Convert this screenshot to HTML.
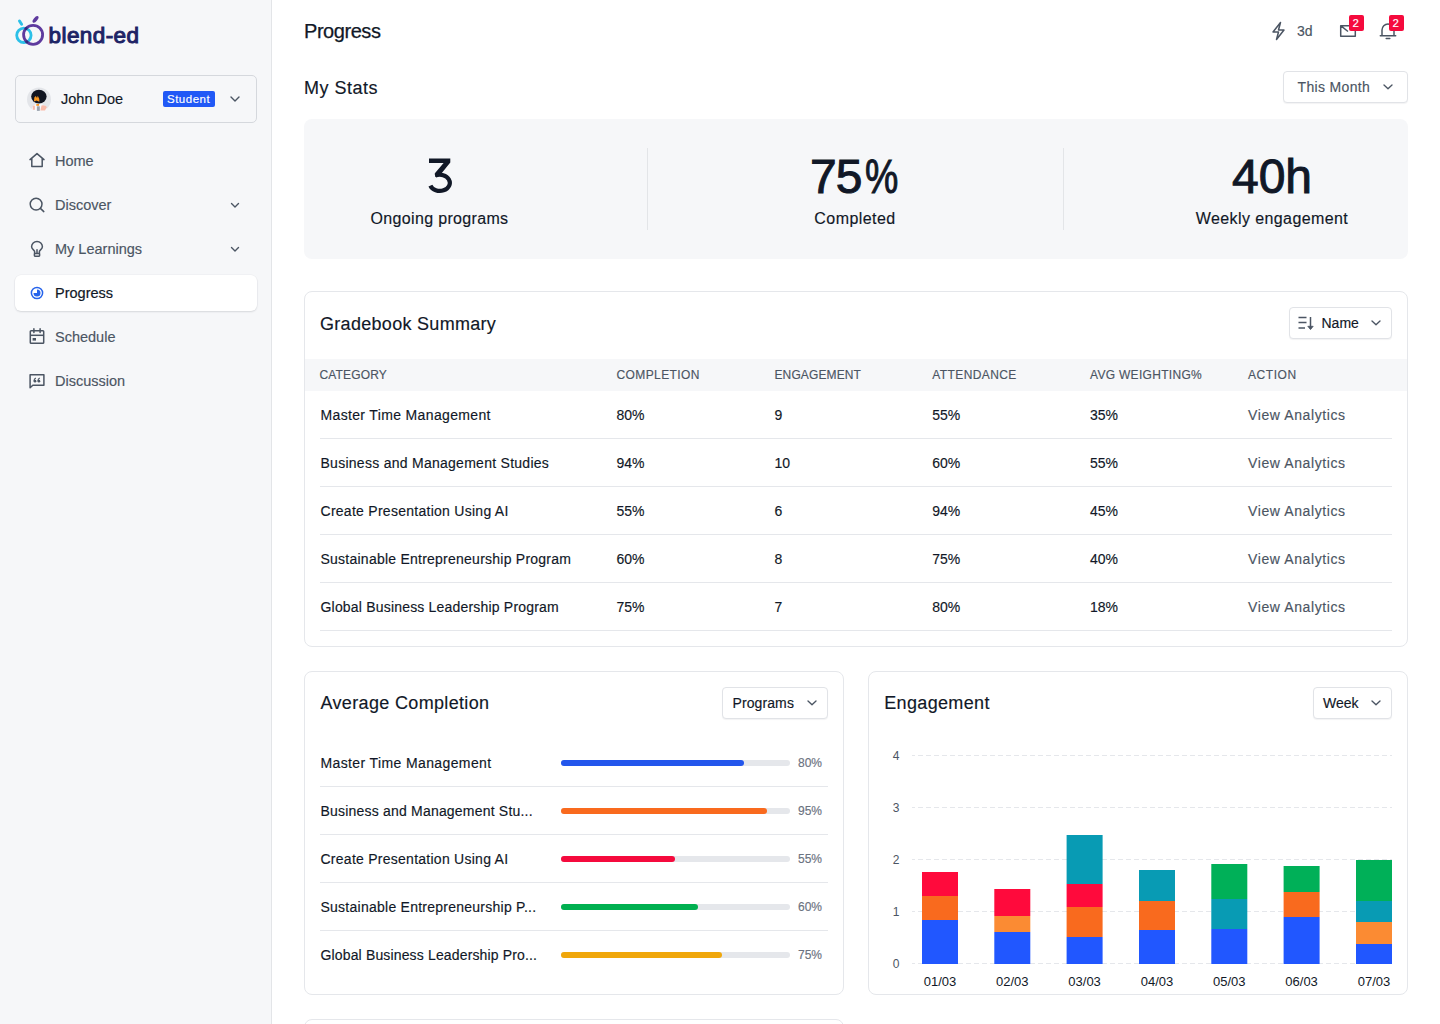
<!DOCTYPE html>
<html><head><meta charset="utf-8">
<style>
*{box-sizing:border-box;margin:0;padding:0}
html,body{width:1440px;height:1024px;overflow:hidden;background:#fff}
body{font-family:"Liberation Sans",sans-serif;color:#111827;position:relative;-webkit-text-stroke:0.15px currentColor}
.abs{position:absolute}
.t{position:absolute;white-space:nowrap;line-height:1}
#side{position:absolute;left:0;top:0;width:272px;height:1024px;background:#F6F7F9;border-right:1px solid #E3E5E8}
.card{position:absolute;border:1px solid #E5E7EB;border-radius:8px;background:#fff}
.dd{position:absolute;border:1px solid #E1E3E7;border-radius:4px;background:#fff;box-shadow:0 1px 1px rgba(16,24,40,0.05)}
.nav{position:absolute;left:15px;width:242px;height:36px}
.nav .t{left:40px;top:11px;font-size:14.5px;color:#4B5563}
.ic{position:absolute}
.th{position:absolute;top:369px;font-size:12px;letter-spacing:0.75px;color:#4B5563;line-height:1;white-space:nowrap}
.td{position:absolute;font-size:14px;letter-spacing:0.35px;color:#111827;line-height:1;white-space:nowrap}
.va{color:#4B5563}
.hr{position:absolute;height:1px;background:#E5E7EB}
</style></head>
<body>
<div id="side">
  <!-- logo -->
  <svg class="abs" style="left:0;top:0" width="150" height="60" viewBox="0 0 150 60">
    <circle cx="23.9" cy="35.3" r="7.2" fill="none" stroke="#2BC0E8" stroke-width="2.8"/>
    <circle cx="33.1" cy="34.8" r="9.5" fill="none" stroke="#5E3A9E" stroke-width="2.8"/>
    <circle cx="26.1" cy="28.5" r="1.5" fill="#2B2C7C"/><circle cx="26.8" cy="41.8" r="1.5" fill="#2B2C7C"/>
    <path d="M19.5 21 L21.6 24.2" stroke="#2BC0E8" stroke-width="3" stroke-linecap="round"/>
    <ellipse cx="35.5" cy="19.3" rx="1.9" ry="4" transform="rotate(40 35.4 19.4)" fill="#5E3A9E"/>
    <text x="48.6" y="42.6" font-family="Liberation Sans" font-size="22.5" fill="#1E2466" stroke="#1E2466" stroke-width="1" letter-spacing="0.4">blend-ed</text>
  </svg>
  <!-- user card -->
  <div class="abs" style="left:15px;top:75px;width:242px;height:48px;border:1px solid #D5D8DD;border-radius:5px"></div>
  <svg class="abs" style="left:27px;top:87px" width="24" height="25" viewBox="0 0 24 25">
    <circle cx="12" cy="12.4" r="12" fill="#E3E5E9"/>
    <path d="M4.5 22.5 Q6 17 12 16.5 Q18 17 20 22.5 Q16.5 25 12 25 Q7.5 25 4.5 22.5 Z" fill="#F8F9FB"/>
    <ellipse cx="11.9" cy="9.6" rx="7.7" ry="6.9" fill="#111521"/>
    <path d="M7 14.5 L7.3 10.5 L8.8 9 L10 11 L10.8 8.7 L12.3 12 L12.4 14.8 L9.5 13.5 Z" fill="#F7941E"/>
    <rect x="9.3" y="17" width="2.8" height="1.8" fill="#F7941E"/>
    <rect x="9.9" y="19.3" width="2.9" height="4.6" fill="#9CA3AF"/>
    <rect x="5.8" y="18.7" width="2.1" height="4.1" fill="#F9BBAA"/>
    <path d="M13.4 23.4 L14.5 18.5 Q18 17.5 19.9 20 L18 23.4 Z" fill="#F9BBAA"/>
  </svg>
  <div class="t" style="left:61px;top:92px;font-size:14.5px;color:#111827">John Doe</div>
  <div class="abs" style="left:163px;top:91px;width:52px;height:16px;background:#2159F6;border-radius:2px"></div>
  <div class="t" style="left:167px;top:94px;font-size:11.5px;color:#fff;letter-spacing:0.5px">Student</div>
  <svg class="abs" style="left:229px;top:93px" width="12" height="12" viewBox="0 0 12 12"><path d="M2 4 L6 8 L10 4" fill="none" stroke="#4B5563" stroke-width="1.4" stroke-linecap="round" stroke-linejoin="round"/></svg>

  <!-- nav -->

  <div class="nav" style="top:143px">
    <div class="t">Home</div>
  </div>
  <div class="nav" style="top:187px">
    <div class="t">Discover</div>
    <svg class="ic" style="left:214px;top:12px" width="12" height="12" viewBox="0 0 12 12"><path d="M2.5 4.5 L6 8 L9.5 4.5" fill="none" stroke="#4B5563" stroke-width="1.4" stroke-linecap="round" stroke-linejoin="round"/></svg>
  </div>
  <div class="nav" style="top:231px">
    <div class="t">My Learnings</div>
    <svg class="ic" style="left:214px;top:12px" width="12" height="12" viewBox="0 0 12 12"><path d="M2.5 4.5 L6 8 L9.5 4.5" fill="none" stroke="#4B5563" stroke-width="1.4" stroke-linecap="round" stroke-linejoin="round"/></svg>
  </div>
  <div class="nav" style="top:275px;background:#fff;border-radius:6px;box-shadow:0 1px 2px rgba(16,24,40,0.12),0 0 0 0.5px rgba(16,24,40,0.04)">
    <div class="t" style="color:#111827;-webkit-text-stroke:0.2px #111827">Progress</div>
  </div>
  <div class="nav" style="top:319px">
    <div class="t">Schedule</div>
  </div>
  <div class="nav" style="top:363px">
    <div class="t">Discussion</div>
  </div>

  <svg class="abs" style="left:24px;top:146px" width="26" height="250" viewBox="24 146 26 250">
    <g fill="none" stroke="#4B5563" stroke-width="1.5" stroke-linejoin="round" stroke-linecap="round">
      <path d="M30 159.6 L37 153.6 L44 159.6 M31.8 158.2 V166.6 H42.2 V158.2"/>
      <circle cx="36.1" cy="204.1" r="5.9"/><path d="M40.4 208.4 L43.8 211.6"/>
      <path d="M34.6 253.2 V251.5 C34.6 250.2 31.6 249.2 31.6 246.8 A5.4 5.4 0 0 1 42.4 246.8 C42.4 249.2 39.4 250.2 39.4 251.5 V253.2"/>
      <path d="M37 249.8 V253"/>
      <rect x="34.4" y="253.4" width="5.2" height="2.8" rx="0.6"/>
    </g>
    <g fill="none" stroke="#4B5563" stroke-width="1.5">
      <rect x="30.3" y="330.7" width="13.4" height="12.5" rx="0.8"/>
      <path d="M30.3 335.3 H43.7"/>
      <path d="M33.9 328.8 V332.6 M40.1 328.8 V332.6" stroke-linecap="round"/>
      <path d="M30.1 385.2 V374.8 H43.9 V385.2 H32.8 L30.1 387.8 Z" stroke-linejoin="round"/>
    </g>
    <rect x="32.6" y="338" width="3.4" height="2.6" fill="#4B5563"/>
    <g fill="#4B5563"><circle cx="35" cy="381.2" r="1.35"/><circle cx="38.9" cy="381.2" r="1.35"/></g><path d="M34 381 Q34 378.6 35.9 377.9 M37.9 381 Q37.9 378.6 39.8 377.9" fill="none" stroke="#4B5563" stroke-width="1.1"/>
    <circle cx="37" cy="293" r="5.6" fill="none" stroke="#2563EB" stroke-width="1.5"/>
    <path d="M37 289.5 A3.5 3.5 0 1 1 33.5 293 L37 293 Z" fill="#2563EB"/>
  </svg>
</div>

<!-- MAIN -->
<div class="t" style="left:304px;top:20.6px;font-size:20px;letter-spacing:-0.45px;-webkit-text-stroke:0.25px #111827;color:#111827">Progress</div>

<!-- top right -->
<svg class="abs" style="left:1270px;top:21px" width="17" height="20" viewBox="0 0 17 20"><path d="M10.5 1.5 L3 11 H8.5 L6.5 18.5 L14 9 H8.5 Z" fill="none" stroke="#4B5563" stroke-width="1.5" stroke-linejoin="round"/></svg>
<div class="t" style="left:1297px;top:23.6px;font-size:14px;color:#4B5563">3d</div>
<svg class="abs" style="left:1339px;top:24px" width="18" height="14" viewBox="0 0 18 14"><path d="M1.7 1.7 H16.3 V12.3 H1.7 Z M1.7 1.7 L9 7.5" fill="none" stroke="#4B5563" stroke-width="1.5" stroke-linejoin="round"/></svg>
<div class="abs" style="left:1349px;top:15px;width:15px;height:16px;background:#F50A3D;border-radius:2px"></div>
<div class="t" style="left:1352.5px;top:17.5px;font-size:11.5px;color:#fff">2</div>
<svg class="abs" style="left:1379px;top:20px" width="18" height="21" viewBox="0 0 18 21"><path d="M3 15.5 V10 A6 6 0 0 1 15 10 V15.5 M1.3 15.8 H16.7 M7.2 18.6 H10.8" fill="none" stroke="#4B5563" stroke-width="1.5" stroke-linecap="round"/></svg>
<div class="abs" style="left:1389px;top:15px;width:15px;height:16px;background:#F50A3D;border-radius:2px"></div>
<div class="t" style="left:1392.5px;top:17.5px;font-size:11.5px;color:#fff">2</div>

<div class="t" style="left:304px;top:79.2px;font-size:18px;letter-spacing:0.5px;color:#111827">My Stats</div>
<div class="dd" style="left:1283px;top:71px;width:125px;height:32px"></div>
<div class="t" style="left:1297.5px;top:80.2px;font-size:14px;letter-spacing:0.35px;color:#4B5563">This Month</div>
<svg class="abs" style="left:1382px;top:81px" width="12" height="12" viewBox="0 0 12 12"><path d="M2 4 L6 7.8 L10 4" fill="none" stroke="#4B5563" stroke-width="1.35" stroke-linecap="round" stroke-linejoin="round"/></svg>

<!-- stats -->
<div class="abs" style="left:304px;top:119px;width:1104px;height:140px;background:#F6F7F9;border-radius:8px"></div>
<div class="abs" style="left:647px;top:148px;width:1px;height:82px;background:#E3E5E8"></div>
<div class="abs" style="left:1063px;top:148px;width:1px;height:82px;background:#E3E5E8"></div>
<svg class="abs" style="left:420px;top:150px" width="40" height="50" viewBox="420 150 40 50"><path d="M429 158.5 H450.3 V162.6 L441.6 173.2 L435.1 177 V173 L443.6 162.9 H429 Z" fill="#111827"/><path d="M435.3 175.6 A10 8.1 0 1 1 430.4 185.6" fill="none" stroke="#111827" stroke-width="4.2"/></svg>
<div class="t" style="left:810px;top:152.7px;font-size:48px;-webkit-text-stroke:1px #111827;letter-spacing:-1px;color:#111827">75</div><div class="t" style="left:864.5px;top:152.7px;font-size:48px;-webkit-text-stroke:1px #111827;color:#111827;transform:scaleX(0.78);transform-origin:0 0">%</div>
<div class="t" style="left:1172px;width:200px;text-align:center;top:152.7px;font-size:48px;-webkit-text-stroke:1px #111827;color:#111827">40h</div>
<div class="t" style="left:339.5px;width:200px;text-align:center;top:210.5px;font-size:16px;letter-spacing:0.33px;color:#111827">Ongoing programs</div>
<div class="t" style="left:755px;width:200px;text-align:center;top:210.5px;font-size:16px;letter-spacing:0.45px;color:#111827">Completed</div>
<div class="t" style="left:1172px;width:200px;text-align:center;top:210.5px;font-size:16px;letter-spacing:0.4px;color:#111827">Weekly engagement</div>

<!-- gradebook -->
<div class="card" style="left:304px;top:291px;width:1104px;height:356px"></div>
<div class="t" style="left:320px;top:314.5px;font-size:18px;letter-spacing:0.3px">Gradebook Summary</div>
<div class="dd" style="left:1289px;top:307px;width:103px;height:32px"></div>
<div class="abs" style="left:305px;top:359px;width:1102px;height:32px;background:#F6F7F9"></div>
<svg class="abs" style="left:1297px;top:316px" width="18" height="15" viewBox="0 0 18 15"><path d="M1.5 1.5 H9.5 M1.5 6.5 H9.5 M1.5 12 H8" stroke="#4B5563" stroke-width="1.5"/><path d="M13.5 1 V12.5" stroke="#4B5563" stroke-width="1.5"/><path d="M10.8 10.3 L13.5 13.6 L16.2 10.3 Z" fill="#4B5563" stroke="#4B5563" stroke-width="0.8" stroke-linejoin="round"/></svg>
<div class="t" style="left:1321.5px;top:316.2px;font-size:14px;color:#111827">Name</div>
<svg class="abs" style="left:1370px;top:317px" width="12" height="12" viewBox="0 0 12 12"><path d="M2 4 L6 7.8 L10 4" fill="none" stroke="#4B5563" stroke-width="1.35" stroke-linecap="round" stroke-linejoin="round"/></svg>
<div class="th" style="left:319.5px;letter-spacing:0.15px">CATEGORY</div>
<div class="th" style="left:616.5px;letter-spacing:0.4px">COMPLETION</div>
<div class="th" style="left:774.5px;letter-spacing:0.12px">ENGAGEMENT</div>
<div class="th" style="left:932.3px;letter-spacing:0.4px">ATTENDANCE</div>
<div class="th" style="left:1090px;letter-spacing:0.3px">AVG WEIGHTING%</div>
<div class="th" style="left:1248px;letter-spacing:0.55px">ACTION</div>
<div class="td" style="left:320.5px;top:408.15px">Master Time Management</div>
<div class="td" style="left:616.5px;top:408.15px;letter-spacing:0">80%</div>
<div class="td" style="left:774.5px;top:408.15px;letter-spacing:0">9</div>
<div class="td" style="left:932.3px;top:408.15px;letter-spacing:0">55%</div>
<div class="td" style="left:1090px;top:408.15px;letter-spacing:0">35%</div>
<div class="td va" style="left:1248px;top:408.15px;letter-spacing:0.6px">View Analytics</div>
<div class="hr" style="left:320px;top:438px;width:1072px"></div>
<div class="td" style="left:320.5px;top:456.15px;letter-spacing:0.27px">Business and Management Studies</div>
<div class="td" style="left:616.5px;top:456.15px;letter-spacing:0">94%</div>
<div class="td" style="left:774.5px;top:456.15px;letter-spacing:0">10</div>
<div class="td" style="left:932.3px;top:456.15px;letter-spacing:0">60%</div>
<div class="td" style="left:1090px;top:456.15px;letter-spacing:0">55%</div>
<div class="td va" style="left:1248px;top:456.15px;letter-spacing:0.6px">View Analytics</div>
<div class="hr" style="left:320px;top:486px;width:1072px"></div>
<div class="td" style="left:320.5px;top:504.15px;letter-spacing:0.27px">Create Presentation Using AI</div>
<div class="td" style="left:616.5px;top:504.15px;letter-spacing:0">55%</div>
<div class="td" style="left:774.5px;top:504.15px;letter-spacing:0">6</div>
<div class="td" style="left:932.3px;top:504.15px;letter-spacing:0">94%</div>
<div class="td" style="left:1090px;top:504.15px;letter-spacing:0">45%</div>
<div class="td va" style="left:1248px;top:504.15px;letter-spacing:0.6px">View Analytics</div>
<div class="hr" style="left:320px;top:534px;width:1072px"></div>
<div class="td" style="left:320.5px;top:552.15px;letter-spacing:0.24px">Sustainable Entrepreneurship Program</div>
<div class="td" style="left:616.5px;top:552.15px;letter-spacing:0">60%</div>
<div class="td" style="left:774.5px;top:552.15px;letter-spacing:0">8</div>
<div class="td" style="left:932.3px;top:552.15px;letter-spacing:0">75%</div>
<div class="td" style="left:1090px;top:552.15px;letter-spacing:0">40%</div>
<div class="td va" style="left:1248px;top:552.15px;letter-spacing:0.6px">View Analytics</div>
<div class="hr" style="left:320px;top:582px;width:1072px"></div>
<div class="td" style="left:320.5px;top:600.15px;letter-spacing:0.19px">Global Business Leadership Program</div>
<div class="td" style="left:616.5px;top:600.15px;letter-spacing:0">75%</div>
<div class="td" style="left:774.5px;top:600.15px;letter-spacing:0">7</div>
<div class="td" style="left:932.3px;top:600.15px;letter-spacing:0">80%</div>
<div class="td" style="left:1090px;top:600.15px;letter-spacing:0">18%</div>
<div class="td va" style="left:1248px;top:600.15px;letter-spacing:0.6px">View Analytics</div>
<div class="hr" style="left:320px;top:630px;width:1072px"></div>


<!-- avg completion -->
<div class="card" style="left:304px;top:671px;width:540px;height:324px"></div>
<div class="t" style="left:320.5px;top:694.3px;font-size:18px;letter-spacing:0.34px">Average Completion</div>
<div class="dd" style="left:722px;top:687px;width:106px;height:32px"></div>

<!-- engagement -->
<div class="card" style="left:868px;top:671px;width:540px;height:324px"></div>
<div class="t" style="left:884.2px;top:694.3px;font-size:18px;letter-spacing:0.35px">Engagement</div>
<div class="dd" style="left:1313px;top:687px;width:79px;height:32px"></div>

<div class="t" style="left:732.5px;top:696.2px;font-size:14px;letter-spacing:0.1px;color:#111827">Programs</div>
<svg class="abs" style="left:806px;top:697px" width="12" height="12" viewBox="0 0 12 12"><path d="M2 4 L6 7.8 L10 4" fill="none" stroke="#4B5563" stroke-width="1.35" stroke-linecap="round" stroke-linejoin="round"/></svg>
<div class="td" style="left:320.5px;top:756.15px;letter-spacing:0.38px">Master Time Management</div>
<div class="abs" style="left:561px;top:760px;width:229px;height:6px;border-radius:3px;background:#E5E7EB"></div>
<div class="abs" style="left:561px;top:760px;width:183px;height:6px;border-radius:3px;background:#2356EC"></div>
<div class="t" style="left:798px;top:756.84px;font-size:12px;color:#6B7280">80%</div>
<div class="hr" style="left:320px;top:786px;width:508px"></div>
<div class="td" style="left:320.5px;top:804.15px;letter-spacing:0.2px">Business and Management Stu...</div>
<div class="abs" style="left:561px;top:808px;width:229px;height:6px;border-radius:3px;background:#E5E7EB"></div>
<div class="abs" style="left:561px;top:808px;width:206px;height:6px;border-radius:3px;background:#F96A1E"></div>
<div class="t" style="left:798px;top:804.84px;font-size:12px;color:#6B7280">95%</div>
<div class="hr" style="left:320px;top:834px;width:508px"></div>
<div class="td" style="left:320.5px;top:852.15px;letter-spacing:0.26px">Create Presentation Using AI</div>
<div class="abs" style="left:561px;top:856px;width:229px;height:6px;border-radius:3px;background:#E5E7EB"></div>
<div class="abs" style="left:561px;top:856px;width:114px;height:6px;border-radius:3px;background:#F50A3D"></div>
<div class="t" style="left:798px;top:852.84px;font-size:12px;color:#6B7280">55%</div>
<div class="hr" style="left:320px;top:882px;width:508px"></div>
<div class="td" style="left:320.5px;top:900.15px;letter-spacing:0.25px">Sustainable Entrepreneurship P...</div>
<div class="abs" style="left:561px;top:904px;width:229px;height:6px;border-radius:3px;background:#E5E7EB"></div>
<div class="abs" style="left:561px;top:904px;width:137px;height:6px;border-radius:3px;background:#00B050"></div>
<div class="t" style="left:798px;top:900.84px;font-size:12px;color:#6B7280">60%</div>
<div class="hr" style="left:320px;top:930px;width:508px"></div>
<div class="td" style="left:320.5px;top:948.15px;letter-spacing:0.15px">Global Business Leadership Pro...</div>
<div class="abs" style="left:561px;top:952px;width:229px;height:6px;border-radius:3px;background:#E5E7EB"></div>
<div class="abs" style="left:561px;top:952px;width:161px;height:6px;border-radius:3px;background:#F0A70B"></div>
<div class="t" style="left:798px;top:948.84px;font-size:12px;color:#6B7280">75%</div>
<div class="t" style="left:1323px;top:696.2px;font-size:14px;letter-spacing:0px;color:#111827">Week</div>
<svg class="abs" style="left:1370px;top:697px" width="12" height="12" viewBox="0 0 12 12"><path d="M2 4 L6 7.8 L10 4" fill="none" stroke="#4B5563" stroke-width="1.35" stroke-linecap="round" stroke-linejoin="round"/></svg>
<svg class="abs" style="left:868px;top:740px" width="540" height="260" viewBox="868 740 540 260"><line x1="912" y1="963.5" x2="1392" y2="963.5" stroke="#E5E7EB" stroke-width="1" stroke-dasharray="5 3" stroke-dashoffset="2"/><text x="896" y="968.3" text-anchor="middle" font-family="Liberation Sans" font-size="12" fill="#4B5563">0</text><line x1="912" y1="911.5" x2="1392" y2="911.5" stroke="#E5E7EB" stroke-width="1" stroke-dasharray="5 3" stroke-dashoffset="2"/><text x="896" y="916.3" text-anchor="middle" font-family="Liberation Sans" font-size="12" fill="#4B5563">1</text><line x1="912" y1="859.5" x2="1392" y2="859.5" stroke="#E5E7EB" stroke-width="1" stroke-dasharray="5 3" stroke-dashoffset="2"/><text x="896" y="864.3" text-anchor="middle" font-family="Liberation Sans" font-size="12" fill="#4B5563">2</text><line x1="912" y1="807.5" x2="1392" y2="807.5" stroke="#E5E7EB" stroke-width="1" stroke-dasharray="5 3" stroke-dashoffset="2"/><text x="896" y="812.3" text-anchor="middle" font-family="Liberation Sans" font-size="12" fill="#4B5563">3</text><line x1="912" y1="755.5" x2="1392" y2="755.5" stroke="#E5E7EB" stroke-width="1" stroke-dasharray="5 3" stroke-dashoffset="2"/><text x="896" y="760.3" text-anchor="middle" font-family="Liberation Sans" font-size="12" fill="#4B5563">4</text><rect x="922" y="872" width="36" height="24" fill="#FF0A3C"/><rect x="922" y="896" width="36" height="24" fill="#F96A1E"/><rect x="922" y="920" width="36" height="44" fill="#2157FF"/><text x="940" y="986.3" text-anchor="middle" font-family="Liberation Sans" font-size="13" fill="#111827">01/03</text><rect x="994.3" y="889" width="36" height="27" fill="#FF0A3C"/><rect x="994.3" y="916" width="36" height="16" fill="#FB8B33"/><rect x="994.3" y="932" width="36" height="32" fill="#2157FF"/><text x="1012.3" y="986.3" text-anchor="middle" font-family="Liberation Sans" font-size="13" fill="#111827">02/03</text><rect x="1066.6" y="835" width="36" height="49" fill="#089BB4"/><rect x="1066.6" y="884" width="36" height="23" fill="#FF0A3C"/><rect x="1066.6" y="907" width="36" height="30" fill="#F96A1E"/><rect x="1066.6" y="937" width="36" height="27" fill="#2157FF"/><text x="1084.6" y="986.3" text-anchor="middle" font-family="Liberation Sans" font-size="13" fill="#111827">03/03</text><rect x="1139" y="870" width="36" height="31" fill="#089BB4"/><rect x="1139" y="901" width="36" height="29" fill="#F96A1E"/><rect x="1139" y="930" width="36" height="34" fill="#2157FF"/><text x="1157" y="986.3" text-anchor="middle" font-family="Liberation Sans" font-size="13" fill="#111827">04/03</text><rect x="1211.3" y="864" width="36" height="35" fill="#00B058"/><rect x="1211.3" y="899" width="36" height="30" fill="#089BB4"/><rect x="1211.3" y="929" width="36" height="35" fill="#2157FF"/><text x="1229.3" y="986.3" text-anchor="middle" font-family="Liberation Sans" font-size="13" fill="#111827">05/03</text><rect x="1283.6" y="866" width="36" height="26" fill="#00B058"/><rect x="1283.6" y="892" width="36" height="25" fill="#F96A1E"/><rect x="1283.6" y="917" width="36" height="47" fill="#2157FF"/><text x="1301.6" y="986.3" text-anchor="middle" font-family="Liberation Sans" font-size="13" fill="#111827">06/03</text><rect x="1356" y="860" width="36" height="41" fill="#00B058"/><rect x="1356" y="901" width="36" height="21" fill="#089BB4"/><rect x="1356" y="922" width="36" height="22" fill="#FB8B33"/><rect x="1356" y="944" width="36" height="20" fill="#2157FF"/><text x="1374" y="986.3" text-anchor="middle" font-family="Liberation Sans" font-size="13" fill="#111827">07/03</text></svg>
<div class="card" style="left:304px;top:1019px;width:540px;height:100px"></div>
</body></html>
